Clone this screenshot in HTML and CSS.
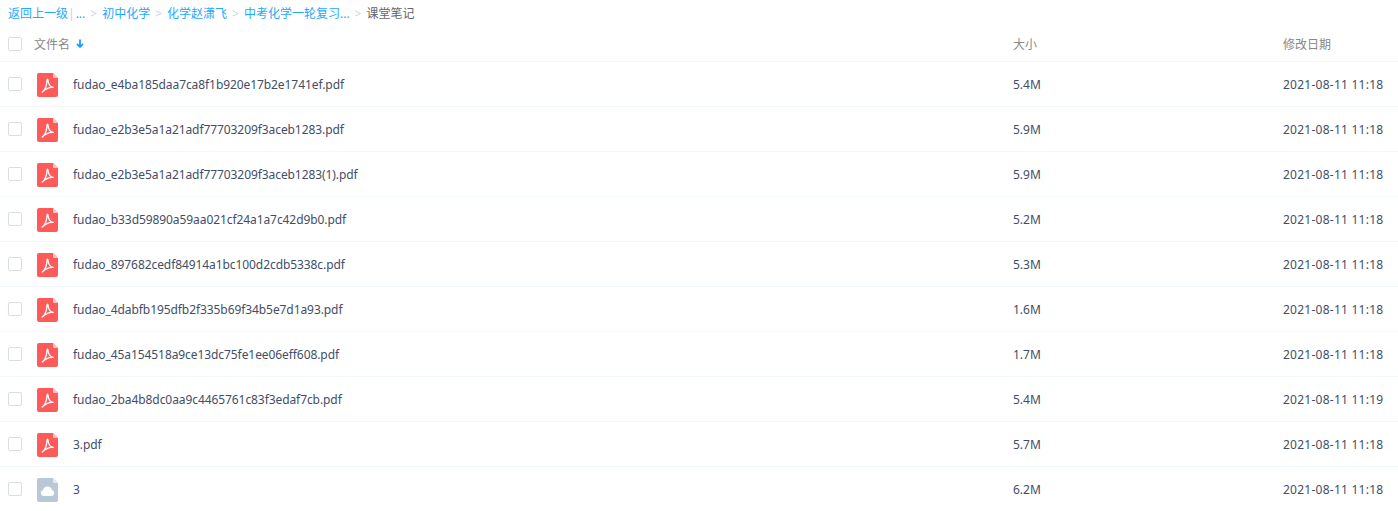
FILE: index.html
```html
<!DOCTYPE html>
<html lang="zh-CN">
<head>
<meta charset="utf-8">
<title>课堂笔记</title>
<link rel="stylesheet" href="styles.css">
</head>
<body>
<svg class="defs" width="0" height="0" aria-hidden="true">
  <symbol id="pdf" viewBox="0 0 21 24">
    <path d="M2 0H16L21 5V22a2 2 0 0 1-2 2H2a2 2 0 0 1-2-2V2a2 2 0 0 1 2-2Z" fill="#ff5a5a"/>
    <path d="M16 0L21 5H17a1 1 0 0 1-1-1Z" fill="#ffc4c4"/>
    <path d="M5.200 19C7.800 17 9.800 13 10 7.200c.1-1.400.9-1.400 1 0 .4 4.300 2 6.600 5.200 7.200-3.500-.6-7.500 1.300-11 4.600Z" fill="none" stroke="#fff" stroke-width="1.300" stroke-linejoin="round"/>
  </symbol>
  <symbol id="cloud" viewBox="0 0 21 24">
    <path d="M2 0H16L21 5V22a2 2 0 0 1-2 2H2a2 2 0 0 1-2-2V2a2 2 0 0 1 2-2Z" fill="#b9c8d6"/>
    <path d="M16 0L21 5H17a1 1 0 0 1-1-1Z" fill="#e3eaf0"/>
    <path d="M7 18a3 3 0 0 1-.9-5.900 4.500 4.500 0 0 1 8.800 0A3 3 0 0 1 14 18Z" fill="#fff"/>
  </symbol>
</svg>
<nav class="crumbs">
  <a class="link">返回上一级</a><span class="pipe">|</span><a class="link dots">...</a><span class="sep">&gt;</span><a class="link">初中化学</a><span class="sep">&gt;</span><a class="link">化学赵潇飞</a><span class="sep">&gt;</span><a class="link">中考化学一轮复习...</a><span class="sep">&gt;</span><span class="current">课堂笔记</span>
</nav>
<div class="table">
  <div class="row head">
    <span class="check"></span>
    <span class="name">文件名<svg class="arrow" width="8" height="9" viewBox="0 0 8 9"><path d="M4 0.500V8M1 5l3 3 3-3" fill="none" stroke="#1e9fff" stroke-width="1.800"/></svg></span>
    <span class="size">大小</span>
    <span class="date">修改日期</span>
  </div>
  <div class="row"><span class="check"></span><svg class="icon"><use href="#pdf"/></svg><span class="file">fudao_e4ba185daa7ca8f1b920e17b2e1741ef.pdf</span><span class="size">5.4M</span><span class="stamp">2021-08-11 11:18</span></div>
  <div class="row"><span class="check"></span><svg class="icon"><use href="#pdf"/></svg><span class="file">fudao_e2b3e5a1a21adf77703209f3aceb1283.pdf</span><span class="size">5.9M</span><span class="stamp">2021-08-11 11:18</span></div>
  <div class="row"><span class="check"></span><svg class="icon"><use href="#pdf"/></svg><span class="file">fudao_e2b3e5a1a21adf77703209f3aceb1283(1).pdf</span><span class="size">5.9M</span><span class="stamp">2021-08-11 11:18</span></div>
  <div class="row"><span class="check"></span><svg class="icon"><use href="#pdf"/></svg><span class="file">fudao_b33d59890a59aa021cf24a1a7c42d9b0.pdf</span><span class="size">5.2M</span><span class="stamp">2021-08-11 11:18</span></div>
  <div class="row"><span class="check"></span><svg class="icon"><use href="#pdf"/></svg><span class="file">fudao_897682cedf84914a1bc100d2cdb5338c.pdf</span><span class="size">5.3M</span><span class="stamp">2021-08-11 11:18</span></div>
  <div class="row"><span class="check"></span><svg class="icon"><use href="#pdf"/></svg><span class="file">fudao_4dabfb195dfb2f335b69f34b5e7d1a93.pdf</span><span class="size">1.6M</span><span class="stamp">2021-08-11 11:18</span></div>
  <div class="row"><span class="check"></span><svg class="icon"><use href="#pdf"/></svg><span class="file">fudao_45a154518a9ce13dc75fe1ee06eff608.pdf</span><span class="size">1.7M</span><span class="stamp">2021-08-11 11:18</span></div>
  <div class="row"><span class="check"></span><svg class="icon"><use href="#pdf"/></svg><span class="file">fudao_2ba4b8dc0aa9c4465761c83f3edaf7cb.pdf</span><span class="size">5.4M</span><span class="stamp">2021-08-11 11:19</span></div>
  <div class="row"><span class="check"></span><svg class="icon"><use href="#pdf"/></svg><span class="file">3.pdf</span><span class="size">5.7M</span><span class="stamp">2021-08-11 11:18</span></div>
  <div class="row"><span class="check"></span><svg class="icon"><use href="#cloud"/></svg><span class="file">3</span><span class="size">6.2M</span><span class="stamp">2021-08-11 11:18</span></div>
</div>
</body>
</html>
```

FILE: styles.css
```css
* { box-sizing: border-box; }
html, body { margin: 0; padding: 0; height: 511px; overflow: hidden; background: #fff; }
body { font-family: "Noto Sans", "Noto Sans CJK SC", sans-serif; font-size: 12px; color: #424e67; }
.defs { position: absolute; }
.crumbs { display: flex; align-items: center; height: 26px; padding-left: 8px; white-space: nowrap; }
.link { color: #1ea8ff; }
.pipe { color: #b5d8ef; margin-right: 1px; }
.sep { color: #c5d8e6; margin: 0 5px; }
.current { color: #666; }
.table { display: flex; flex-direction: column; }
.row { display: flex; align-items: center; height: 45px; padding-left: 8px; border-bottom: 1px solid #f2f6fd; }
.row:last-child { border-bottom-color: transparent; }
.head { height: 36px; color: #888; }
.check { flex: none; width: 14px; height: 14px; border: 1px solid #d8dee6; border-radius: 2px; background: #fff; }
.name { flex: none; margin-left: 12px; width: 979px; display: flex; align-items: center; gap: 6px; }
.arrow { display: block; }
.icon { flex: none; width: 21px; height: 24px; margin: 2px 0 0 15px; }
.file { flex: none; width: 940px; margin-left: 15px; white-space: nowrap; letter-spacing: -0.08px; }
.size { flex: none; width: 270px; }
.date { flex: none; white-space: nowrap; }
.stamp { flex: none; white-space: nowrap; letter-spacing: 0.25px; }
```
